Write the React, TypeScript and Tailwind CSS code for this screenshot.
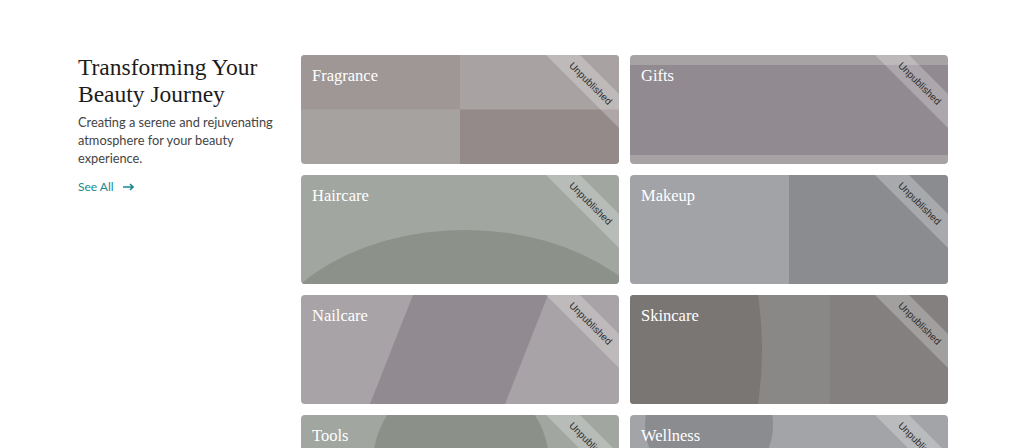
import React from 'react';

type Cat = { name: string; art: React.ReactNode };

const W = 318;
const H = 109;

const categories: Cat[] = [
    {
        name: 'Fragrance',
        art: (
            <>
                <rect x="0" y="0" width={W} height={H} fill="#a6a2a0" />
                <rect x="0" y="0" width="159" height="54.5" fill="#9e9796" />
                <rect x="159" y="0" width="159" height="54.5" fill="#a8a3a2" />
                <rect x="159" y="54.5" width="159" height="54.5" fill="#948a8a" />
            </>
        ),
    },
    {
        name: 'Gifts',
        art: (
            <>
                <rect x="0" y="0" width={W} height={H} fill="#a7a2a3" />
                <rect x="0" y="10" width={W} height="90" fill="#918a90" />
            </>
        ),
    },
    {
        name: 'Haircare',
        art: (
            <>
                <rect x="0" y="0" width={W} height={H} fill="#a1a6a0" />
                <ellipse cx="164" cy="200" rx="211" ry="145" fill="#8c918a" />
            </>
        ),
    },
    {
        name: 'Makeup',
        art: (
            <>
                <rect x="0" y="0" width={W} height={H} fill="#a2a3a6" />
                <rect x="159" y="0" width="159" height={H} fill="#8a8c90" />
            </>
        ),
    },
    {
        name: 'Nailcare',
        art: (
            <>
                <rect x="0" y="0" width={W} height={H} fill="#a8a3a6" />
                <polygon points="112,0 247,0 204,109 69,109" fill="#918a91" />
            </>
        ),
    },
    {
        name: 'Skincare',
        art: (
            <>
                <rect x="0" y="0" width={W} height={H} fill="#83807f" />
                <rect x="0" y="0" width="200" height={H} fill="#898886" />
                <ellipse cx="-20" cy="54.5" rx="152" ry="239" fill="#7a7673" />
            </>
        ),
    },
    {
        name: 'Tools',
        art: (
            <>
                <rect x="0" y="0" width={W} height={H} fill="#a1a6a0" />
                <circle cx="160" cy="48" r="88" fill="#8b9089" />
            </>
        ),
    },
    {
        name: 'Wellness',
        art: (
            <>
                <rect x="0" y="0" width={W} height={H} fill="#a3a4a7" />
                <circle cx="79" cy="10" r="64" fill="#8a8c90" />
            </>
        ),
    },
];

const CategoryCard: React.FC<Cat> = ({ name, art }) => (
    <div className="relative h-[109px] overflow-hidden rounded-[4px]">
        <svg className="absolute inset-0 h-full w-full" viewBox={`0 0 ${W} ${H}`} preserveAspectRatio="none">
            {art}
        </svg>
        <h3 className="relative px-[11px] pt-[9px] text-[16.5px] leading-[24px] text-white font-['Liberation_Serif',serif]">
            {name}
        </h3>
        <div className="absolute right-[-52px] top-[16px] flex h-[24px] w-[160px] rotate-45 items-center justify-center bg-white/25">
            <span className="text-[10px] text-[#2f2f2f] font-['Liberation_Sans',sans-serif]">Unpublished</span>
        </div>
    </div>
);

export default function App() {
    return (
        <div className="h-[448px] overflow-hidden bg-white">
            <div className="ml-[78px] flex w-[870px] pt-[54px]">
                <div className="w-[223px] shrink-0 pr-[24px]">
                    <h2 className="text-[23.5px] leading-[27px] text-[#1c1c1c] font-['Liberation_Serif',serif]">
                        Transforming Your
                        <br />
                        Beauty Journey
                    </h2>
                    <p className="mt-[5px] text-[12.8px] leading-[18px] text-[#444] font-['Lato',sans-serif]">
                        Creating a serene and rejuvenating atmosphere for your beauty experience.
                    </p>
                    <a href="#" className="mt-[11px] flex items-center gap-[9px] text-[12px] text-[#1b8a8f] font-['Lato',sans-serif]">
                        See All
                        <svg width="11" height="8" viewBox="0 0 11 8" fill="none" stroke="#1b8a8f" strokeWidth="1.6">
                            <path d="M0 4h10M7 1l3 3-3 3" />
                        </svg>
                    </a>
                </div>
                <div className="mt-px grid w-[647px] grid-cols-2 gap-x-[11px] gap-y-[11px]">
                    {categories.map((c) => (
                        <CategoryCard key={c.name} {...c} />
                    ))}
                </div>
            </div>
        </div>
    );
}
